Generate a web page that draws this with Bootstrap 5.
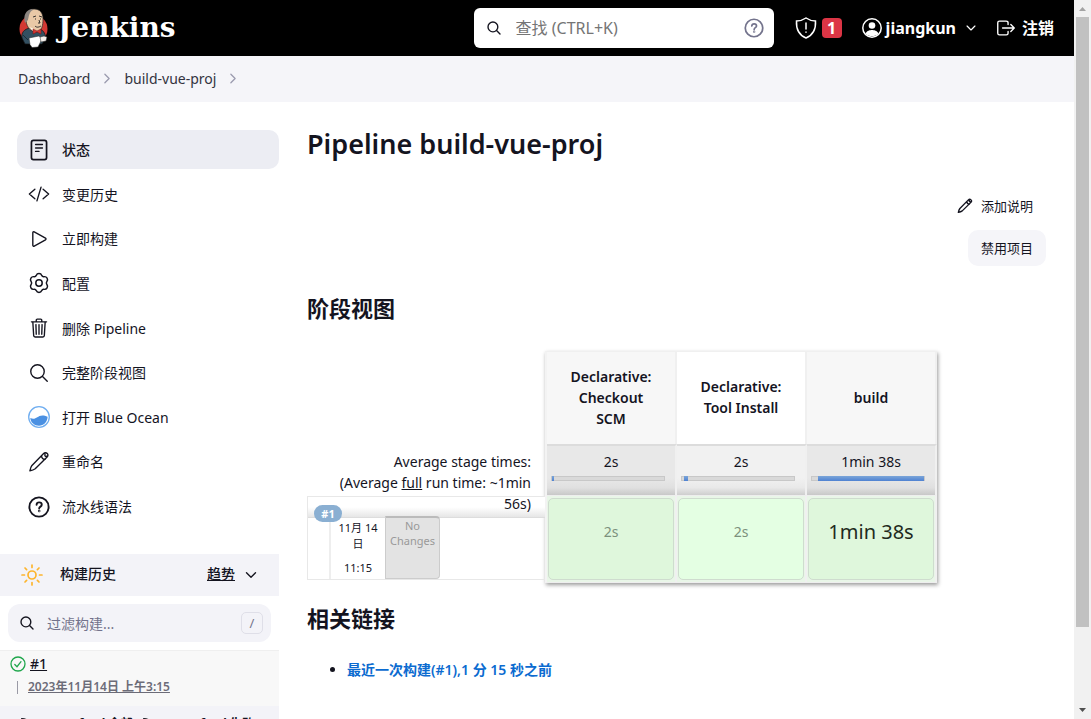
<!DOCTYPE html>
<html lang="zh-CN">
<head>
<meta charset="utf-8">
<meta name="viewport" content="width=device-width, initial-scale=1">
<title>build-vue-proj [Jenkins]</title>
<link href="https://cdn.jsdelivr.net/npm/bootstrap@5.3.0/dist/css/bootstrap.min.css" rel="stylesheet">
<style>
  body { font-family: "Noto Sans", "Noto Sans CJK SC", sans-serif; font-size: 14px; line-height: 21px; color: #14141f; background: #fff; }
  a { color: inherit; }
  svg { flex: none; display: block; }
  .line-icon { fill: none; stroke: currentColor; stroke-width: 32; stroke-linecap: round; stroke-linejoin: round; }
  .line-icon.bold-line { stroke-width: 44; }
  .topbar { height: 56px; background: #000; color: #fff; padding: 0 20px 0 18px; }
  .brand-name { font-family: "DejaVu Serif", serif; font-weight: 700; font-size: 28px; line-height: 32px; }
  .top-search { width: 300px; height: 40px; background: #fff; border-radius: 6px; padding: 0 10px 0 12px; color: #14141f; }
  .bare-input { border: 0; background: none; outline: 0; padding: 0; min-width: 0; }
  .top-search .bare-input { font-size: 16px; margin: 0 14px; }
  .top-search .bare-input::placeholder { color: #757575; opacity: 1; }
  .top-link { font-size: 16px; font-weight: 700; }
  .alert-count { width: 20px; height: 20px; border-radius: 4px; background: #dc3545; font-size: 16px; font-weight: 700; line-height: 20px; }
  .crumbs { height: 46px; background: #f5f5f9; padding: 0 18px 2px; color: #333340; }
  .side { width: 279px; }
  .tasks { height: 396px; margin: 28px 0 28px 17px; }
  .task { height: 39px; border-radius: 10px; padding: 0 11px; gap: 12px; }
  .task.current { background: #ecedf3; font-weight: 500; }
  .panel-head { height: 42px; background: #f3f3f8; padding: 0 20px; font-weight: 500; }
  .panel-label { padding-bottom: 4px; }
  .filter { height: 38px; margin: 8px; border-radius: 12px; background: #f3f3f8; padding: 0 8px 0 11px; }
  .filter .bare-input::placeholder { color: #73738c; opacity: 1; }
  .keycap { width: 23px; height: 22px; border: 1px solid #dfdfe8; border-radius: 5px; color: #73738c; line-height: 20px; font-size: 13px; }
  .run-row { height: 56px; background: #f8f8f8; border-top: 1px solid #efefef; padding: 2px 10px; }
  .run-date { font-size: 12px; color: #6c6c78; font-weight: 600; border-left: 1px solid #9a9aa5; height: 13px; line-height: 12px; margin: 7px 0 0 7px; padding-left: 10px; }
  .feeds { background: #f3f3f8; height: 40px; padding: 7px 20px; font-size: 12px; font-weight: 700; gap: 9px; }
  .content { padding: 24px 28px 0; }
  h1 { font-size: 27px; line-height: 36px; font-weight: 600; margin: 0 0 26px; }
  h2 { font-size: 22px; line-height: 30px; font-weight: 600; margin: 0; }
  .act { border: 0; background: none; color: inherit; font-size: 13px; height: 36px; padding: 0 13px; border-radius: 10px; }
  .act.filled { background: #f5f5f9; }
  .page-acts { gap: 6px; margin-bottom: 27px; }
  .avg { height: 45px; margin-top: 100px; padding-right: 14px; text-align: right; z-index: 1; }
  .avg div { width: 210px; }
  .runs { width: 238px; }
  .run { height: 84px; border: 1px solid #e8e8e8; border-right: 0; }
  .run-strip { height: 21px; background: linear-gradient(#fff 50%, #e6e6e6); border-bottom: 1px solid #ddd; }
  .run-tag { left: 6px; top: 8px; z-index: 2; width: 28px; height: 17px; border-radius: 9px; background: #8aafd2; color: #fff; font-size: 11px; line-height: 17px; font-weight: 700; }
  .run-when { width: 56px; height: 61px; margin-left: 21px; border-left: 2px solid #eee; font-size: 11px; line-height: 16px; padding-top: 2px; }
  .run-changes { width: 55px; height: 63px; background: #e3e3e3; border: 1px solid #ccc; border-top: 2px solid #bbb; border-radius: 0 4px 4px 0; color: #999; font-size: 11px; line-height: 15px; margin-top: -2px; }
  .stages { width: 392px; border-collapse: separate; border-spacing: 0; table-layout: fixed; border-left: 2px solid #f3f3f3; border-top: 1px solid #f0f0f0; border-bottom: 1px solid #eee; box-shadow: 1px 2px 4px rgba(0,0,0,.4); text-align: center; background: #fff; }
  .stages th, .stages td { border-right: 2px solid #f0f0f0; padding: 0; }
  .stages th { height: 92px; background: #fff; font-weight: 600; padding: 0 16px 2px; }
  .stages th:nth-child(odd) { background: #f7f7f7; }
  .stages .totals td { height: 52px; border-top: 2px solid #dcdcdc; border-bottom: 1px solid #eee; background: linear-gradient(#f1f1f1 65%, #e9e9e9 85%, #cecece); vertical-align: top; padding-top: 5px; }
  .stages .totals td:nth-child(odd) { background: linear-gradient(#e8e8e8 65%, #e0e0e0 85%, #c8c8c8); }
  .stages .result td { height: 86px; background: #e9f6e8; padding: 2px 1px; }
  .meter { width: 114px; height: 5px; margin: 4px 0 0 4px; background: #d9d9d9; border: 1px solid #c8c8c8; }
  .meter span { height: 5px; margin-top: -1px; background: linear-gradient(#7ba5d8, #4f82d2); }
  .ok-box { height: 82px; border: 1px solid #cfdccf; border-radius: 5px; background: #dff7dc; color: #7c917c; }
  .stages td:nth-child(2) .ok-box { background: #e4ffe3; }
  .ok-box.long { font-size: 20px; color: #1e2a20; }
  .links { margin: 26px 0 0; padding-left: 40px; }
  .permalink { color: #0b6bd0; font-weight: 600; font-size: 14px; text-decoration: none; }
  .rail { width: 17px; background: #f1f1f1; }
  .rail-thumb { width: 13px; height: 610px; max-height: 85vh; background: #c1c1c1; }
</style>
</head>
<body>
<svg class="d-none" aria-hidden="true">
  <symbol id="search" viewBox="0 0 512 512"><path d="M221 64a157 157 0 10157 157A157 157 0 00221 64zM338 338l110 110"/></symbol>
  <symbol id="chev-r" viewBox="0 0 512 512"><path d="M184 112l144 144-144 144"/></symbol>
  <symbol id="chev-d" viewBox="0 0 512 512"><path d="M112 184l144 144 144-144"/></symbol>
  <symbol id="pencil" viewBox="0 0 512 512"><path d="M364 60l-272 276c-20 28-40 84-48 124 40-8 96-28 124-48l276-272c26-26 26-58 4-80s-58-26-84 0zM314 112c4 50 38 84 84 84M398 70c-18 40 6 68 44 46"/></symbol>
  <symbol id="help" viewBox="0 0 512 512"><circle cx="256" cy="256" r="224"/><path d="M200 203c2-38 28-55 60-55 34 0 60 20 60 54 0 46-60 44-60 90"/><circle cx="260" cy="350" r="8"/></symbol>
  <symbol id="feed" viewBox="0 0 16 16"><path d="M2 2a12 12 0 0112 12M2 7a7 7 0 017 7M3 13h.1"/></symbol>
</svg>
<div class="d-flex vh-100 overflow-hidden">
<div class="flex-grow-1">
  <header class="topbar d-flex align-items-center">
    <a href="#" class="d-flex align-items-center text-decoration-none text-white gap-2">
      <svg width="32" height="40" viewBox="0 0 32 40">
        <circle cx="15.500" cy="21" r="14" fill="#d33833"/>
        <path d="M4 30C3 25 6 21 12 20l8 1c5 0 7 4 8 9l-4 6H7z" fill="#335061" stroke="#111" stroke-width=".7"/>
        <path d="M8 13C7 6 10 1 16 1s9 4 9 10-1 12-6 13C13 24 9 20 8 13z" fill="#e9c9a7" stroke="#222" stroke-width=".7"/>
        <path d="M7 15C5 7 8 2 14 1l1 1c-4 2-4 6-5 10z" fill="#8b8580"/>
        <path d="M15 9l3-1m3 0l3 1M17 11h1m4 0h1m-2 1l1 3h-2m-3 3c2 2 4 1 6 0" fill="none" stroke="#222" stroke-width=".9"/>
        <path d="M12 19l3 4 3 1-1-2z" fill="#fff"/>
        <path d="M15 21l4 2 4-2v5l-4-2-4 2z" fill="#d33833" stroke="#711" stroke-width=".5"/>
        <path d="M11 30l10-2 3 3-4 8-6 .5-2-3z" fill="#fff" stroke="#222" stroke-width=".5"/>
        <path d="M22 29l4-1 3 1-1 4-5 1z" fill="#f5f0eb" stroke="#222" stroke-width=".5"/>
        <path d="M5 27l5 5" stroke="#1b2d38"/>
      </svg>
      <span class="brand-name">Jenkins</span>
    </a>
    <div class="ms-auto d-flex align-items-center">
      <form class="top-search d-flex align-items-center">
        <svg class="line-icon bold-line" width="16" height="16"><use href="#search"/></svg>
        <input class="bare-input flex-grow-1" type="text" aria-label="查找" placeholder="查找 (CTRL+K)">
        <svg class="line-icon bold-line" width="20" height="20" color="#73738c"><use href="#help"/></svg>
      </form>
      <a href="#" class="d-flex align-items-center text-white text-decoration-none ms-3 ps-1 gap-1" aria-label="安全警告">
        <svg width="24" height="24" viewBox="0 0 24 24" fill="none" stroke="#fff" stroke-width="1.5" stroke-linecap="round"><path d="M12 2c-3 2-6 3-9.500 3C2 13 5 19 12 22c7-3 10-9 9.500-17C18 5 15 4 12 2zM12 7v6M12 16v.3"/></svg>
        <span class="alert-count text-center ">1</span>
      </a>
      <a href="#" class="top-link d-flex align-items-center text-white text-decoration-none ms-3 gap-1">
        <svg class="ms-1" width="20" height="20" viewBox="0 0 20 20"><circle cx="10" cy="10" r="9.200" fill="none" stroke="#fff" stroke-width="1.500"/><circle cx="10" cy="7.500" r="3.300" fill="#fff"/><path d="M3.500 15.500C5 12.500 8 12 10 12s5 .5 6.500 3.500C14 19 6 19 3.500 15.500z" fill="#fff"/></svg>
        jiangkun
        <svg class="line-icon bold-line ms-1" width="14" height="14"><use href="#chev-d"/></svg>
      </a>
      <a href="#" class="top-link d-flex align-items-center text-white text-decoration-none ms-3 gap-1">
        <svg class="line-icon" width="24" height="22" viewBox="0 0 512 512"><path d="M304 336v40a40 40 0 01-40 40H104a40 40 0 01-40-40V136a40 40 0 0140-40h152c22 0 48 18 48 40v40M368 336l80-80-80-80M176 256h256"/></svg>
        注销
      </a>
    </div>
  </header>
  <nav class="crumbs d-flex align-items-center" aria-label="breadcrumb">
    <a class="text-decoration-none" href="#">Dashboard</a>
    <svg class="line-icon bold-line mx-2" width="18" height="15" color="#9a9aae"><use href="#chev-r"/></svg>
    <a class="text-decoration-none" href="#">build-vue-proj</a>
    <svg class="line-icon bold-line ms-2" width="18" height="15" color="#9a9aae"><use href="#chev-r"/></svg>
  </nav>
  <div class="d-flex">
    <aside class="side flex-shrink-0">
      <nav class="tasks d-flex flex-column justify-content-between">
        <a href="#" class="task current d-flex align-items-center text-decoration-none"><svg class="line-icon" width="22" height="22" viewBox="0 0 512 512"><rect x="80" y="32" width="352" height="448" rx="48" stroke-width="40"/><path d="M176 128h160M176 208h160M176 288h80"/></svg>状态</a>
        <a href="#" class="task d-flex align-items-center text-decoration-none"><svg class="line-icon" width="22" height="22" viewBox="0 0 512 512"><path d="M160 368L32 256l128-112M352 368l128-112-128-112M304 96l-96 320"/></svg>变更历史</a>
        <a href="#" class="task d-flex align-items-center text-decoration-none"><svg class="line-icon" width="22" height="22" viewBox="0 0 512 512"><path d="M112 111v290c0 17 18 28 33 20l262-146c15-8 15-30 0-38L145 91c-15-8-33 3-33 20z"/></svg>立即构建</a>
        <a href="#" class="task d-flex align-items-center text-decoration-none"><svg width="22" height="22" viewBox="0 0 24 24" fill="none" stroke="currentColor" stroke-width="1.600" stroke-linejoin="round"><circle cx="12" cy="12" r="3.500"/><path d="M9 3.700C10 1 14 1 15 3.700c.4 1 1.500 1.600 2.600 1.400 2.800-.4 4.800 3 3 5.200-.7 1-.7 2.400 0 3.400 1.800 2.200-.2 5.600-3 5.200-1.100-.2-2.200.4-2.600 1.400-1 2.700-5 2.700-6 0-.4-1-1.500-1.600-2.600-1.400-2.800.4-4.800-3-3-5.200.7-1 .7-2.400 0-3.400-1.800-2.200.2-5.600 3-5.200C7.500 5.300 8.600 4.700 9 3.700z"/></svg>配置</a>
        <a href="#" class="task d-flex align-items-center text-decoration-none"><svg class="line-icon" width="22" height="22" viewBox="0 0 512 512"><path d="M112 112l20 320c1 18 14 32 32 32h184c18 0 31-14 32-32l20-320M80 112h352M192 112V72c0-14 10-24 24-24h80c14 0 24 10 24 24v40M256 176v224M184 176l8 224M328 176l-8 224"/></svg>删除 Pipeline</a>
        <a href="#" class="task d-flex align-items-center text-decoration-none"><svg class="line-icon" width="22" height="22"><use href="#search"/></svg>完整阶段视图</a>
        <a href="#" class="task d-flex align-items-center text-decoration-none"><svg width="22" height="22" viewBox="0 0 22 22"><circle cx="11" cy="11" r="10.300" fill="#fff" stroke="#70aef0" stroke-width="1.300"/><path d="M2.300 12c3 1.500 5 .5 7-.8s5-3 10.300-.5c0 5-4 9-8.600 9s-8.300-3-8.700-7.700z" fill="#4a90e2"/></svg>打开 Blue Ocean</a>
        <a href="#" class="task d-flex align-items-center text-decoration-none"><svg class="line-icon" width="22" height="22"><use href="#pencil"/></svg>重命名</a>
        <a href="#" class="task d-flex align-items-center text-decoration-none"><svg class="line-icon bold-line" width="22" height="22"><use href="#help"/></svg>流水线语法</a>
      </nav>
      <section>
        <div class="panel-head d-flex align-items-center">
          <svg width="24" height="24" viewBox="0 0 24 24" fill="none" stroke="#fdb52e" stroke-width="1.700" stroke-linecap="round"><circle cx="12" cy="12" r="4"/><path d="M12 2v2.500M12 19.500V22M2 12h2.500M19.500 12H22M5 5l1.600 1.600M17.400 17.400L19 19M5 19l1.600-1.600M17.400 6.600L19 5"/></svg>
          <span class="panel-label ms-3">构建历史</span>
          <a href="#" class="panel-label ms-auto me-2">趋势</a>
          <svg class="line-icon bold-line" width="16" height="16"><use href="#chev-d"/></svg>
        </div>
        <div class="filter d-flex align-items-center">
          <svg class="line-icon bold-line" width="16" height="16"><use href="#search"/></svg>
          <input class="bare-input flex-grow-1 ms-2 ps-1" type="text" aria-label="过滤构建" placeholder="过滤构建...">
          <span class="keycap text-center">/</span>
        </div>
        <div class="run-row">
          <div class="d-flex align-items-center gap-1">
            <svg width="16" height="16" viewBox="0 0 16 16" fill="none" stroke="#1ea64b" stroke-width="1.300" stroke-linecap="round"><circle cx="8" cy="8" r="7"/><path d="M4.800 8.500l2.200 2.200 4-5"/></svg>
            <a href="#" class="fw-medium">#1</a>
          </div>
          <div class="run-date"><a href="#">2023年11月14日 上午3:15</a></div>
        </div>
        <div class="feeds d-flex align-items-start">
          <svg class="mt-1" width="14" height="14" fill="none" stroke="#14141f" stroke-width="1.700" stroke-linecap="round"><use href="#feed"/></svg><a href="#" class="text-decoration-none">Atom feed 全部</a>
          <svg class="mt-1" width="14" height="14" fill="none" stroke="#14141f" stroke-width="1.700" stroke-linecap="round"><use href="#feed"/></svg><a href="#" class="text-decoration-none">Atom feed 失败</a>
        </div>
      </section>
    </aside>
    <main class="content flex-grow-1">
      <h1>Pipeline build-vue-proj</h1>
      <div class="page-acts d-flex flex-column align-items-end">
        <button type="button" class="act d-flex align-items-center gap-2"><svg class="line-icon bold-line" width="16" height="16"><use href="#pencil"/></svg>添加说明</button>
        <button type="button" class="act filled">禁用项目</button>
      </div>
      <h2>阶段视图</h2>
      <div class="d-flex align-items-start mt-4 pt-1">
        <div class="runs">
          <div class="avg position-relative d-flex justify-content-end"><div>Average stage times:<br>(Average <u>full</u> run time: ~1min 56s)</div></div>
          <div class="run position-relative">
            <div class="run-strip"></div>
            <span class="run-tag position-absolute text-center">#1</span>
            <div class="d-flex">
              <div class="run-when text-center"><div class="px-1">11月 14日</div><div class="mt-2">11:15</div></div>
              <div class="run-changes text-center">No Changes</div>
            </div>
          </div>
        </div>
        <table class="stages">
          <thead><tr><th>Declarative: Checkout SCM</th><th>Declarative: Tool Install</th><th>build</th></tr></thead>
          <tbody>
            <tr class="totals">
              <td>2s<div class="meter"><span class="d-block" style="width:2%"></span></div></td>
              <td>2s<div class="meter"><span class="d-block" style="width:3%;margin-left:2%"></span></div></td>
              <td>1min 38s<div class="meter"><span class="d-block" style="width:95%;margin-left:5%"></span></div></td>
            </tr>
            <tr class="result">
              <td><div class="ok-box d-flex align-items-center justify-content-center pb-3">2s</div></td>
              <td><div class="ok-box d-flex align-items-center justify-content-center pb-3">2s</div></td>
              <td><div class="ok-box long d-flex align-items-center justify-content-center pb-3">1min 38s</div></td>
            </tr>
          </tbody>
        </table>
      </div>
      <h2 class="mt-3 pt-1">相关链接</h2>
      <ul class="links"><li><a class="permalink" href="#">最近一次构建(#1),1 分 15 秒之前</a></li></ul>
    </main>
  </div>
</div>
<div class="rail d-flex flex-column align-items-center flex-shrink-0">
  <svg width="17" height="17" viewBox="0 0 17 17"><path d="M5 11h7L8.500 7z" fill="#a3a3a3"/></svg>
  <div class="rail-thumb"></div>
  <svg class="mt-auto" width="17" height="17" viewBox="0 0 17 17"><path d="M5 6h7l-3.500 4z" fill="#505050"/></svg>
</div>
</div>
<script src="https://cdn.jsdelivr.net/npm/bootstrap@5.3.0/dist/js/bootstrap.bundle.min.js"></script>
</body>
</html>
